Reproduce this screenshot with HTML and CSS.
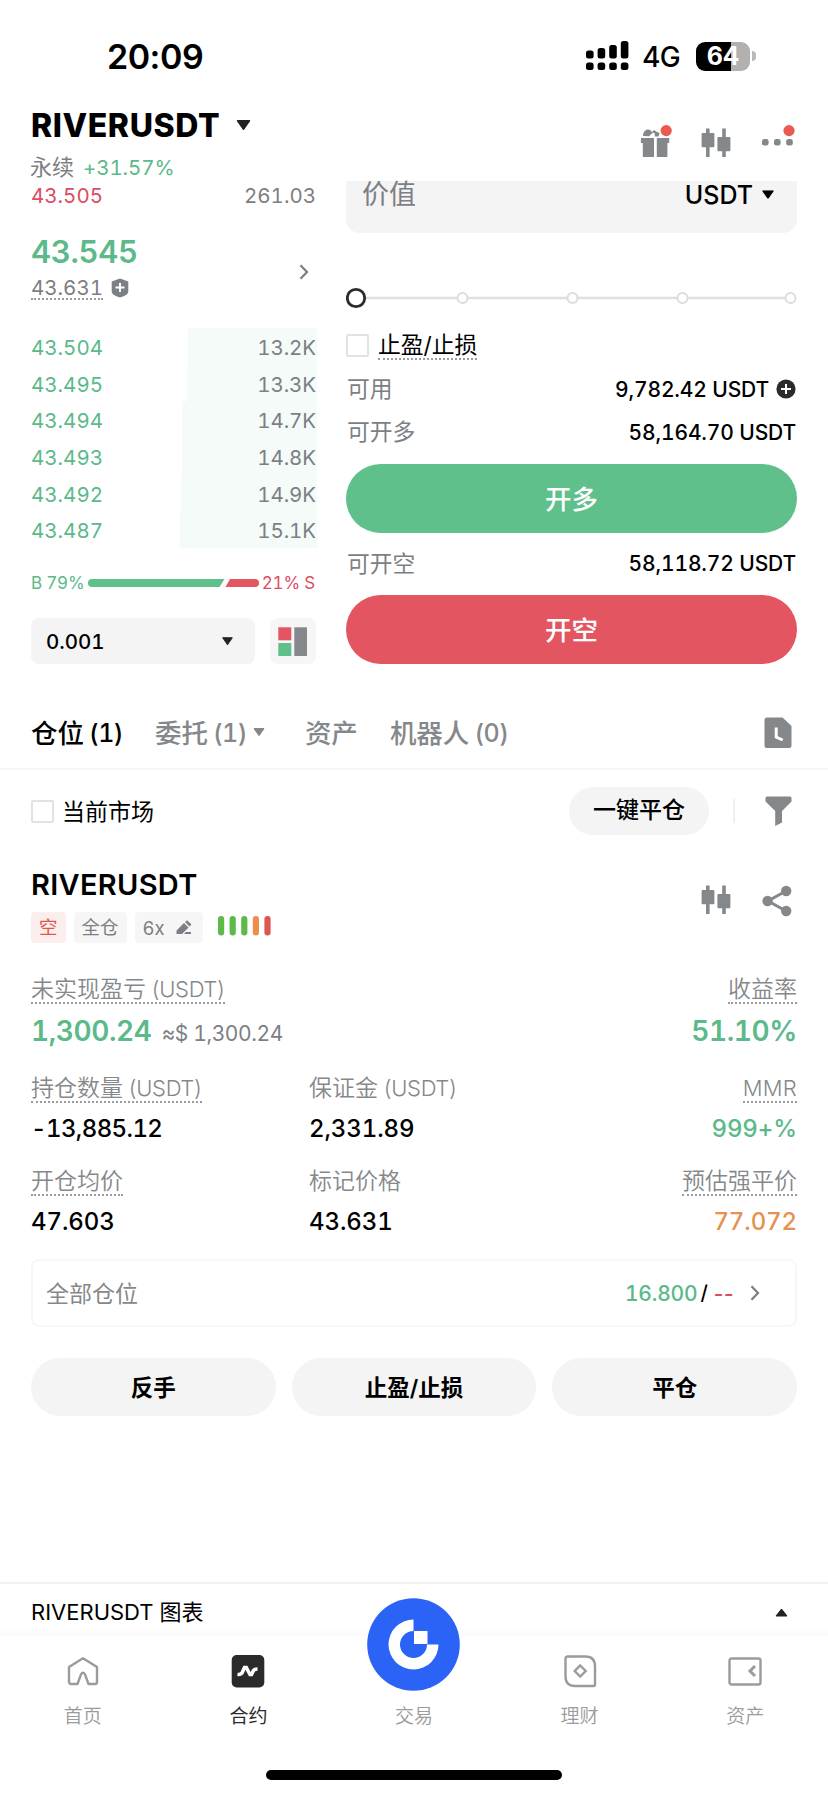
FILE: index.html
```html
<!DOCTYPE html>
<html lang="zh-CN">
<head>
<meta charset="utf-8">
<title>RIVERUSDT</title>
<link rel="stylesheet" href="styles.css">
</head>
<body>
<svg width="0" height="0" class="defs">
  <symbol id="candles" viewBox="0 0 30 30"><path d="M5 .5h3.6v4.6h3.8a1 1 0 0 1 1 1v12.2a1 1 0 0 1-1 1H8.600v9.700H5v-9.700H1.600a1 1 0 0 1-1-1V6.100a1 1 0 0 1 1-1H5zM21.200.5h3.600v8.600h3.600a1 1 0 0 1 1 1v12.200a1 1 0 0 1-1 1h-3.600v5.700h-3.600v-5.700h-3.800a1 1 0 0 1-1-1V10.100a1 1 0 0 1 1-1h3.800z"/></symbol>
  <symbol id="down" viewBox="0 0 14 10"><path d="M1 .8h12L7 9.400z" stroke-width="1.400" stroke-linejoin="round"/></symbol>
  <symbol id="chev" viewBox="0 0 10 16"><path d="M1.500 1.200 8 8l-6.500 6.800" fill="none" stroke="#7b7e82" stroke-width="2.200"/></symbol>
</svg>
<div class="phone">
  <header class="status">
    <span class="time">20:09</span>
    <div class="status-right">
      <svg width="43" height="30" viewBox="0 0 43 30"><rect x="0" y="9.500" width="7.600" height="8" rx="2.500"/><rect x="11.600" y="7" width="7.600" height="10.500" rx="2.500"/><rect x="23.200" y="4" width="7.600" height="13.500" rx="2.500"/><rect x="34.800" y="0" width="7.600" height="17.500" rx="2.500"/><rect x="0" y="21.500" width="7.600" height="7.500" rx="2.500"/><rect x="11.600" y="21.500" width="7.600" height="7.500" rx="2.500"/><rect x="23.200" y="21.500" width="7.600" height="7.500" rx="2.500"/><rect x="34.800" y="21.500" width="7.600" height="7.500" rx="2.500"/></svg>
      <span class="net">4G</span>
      <span class="battery">64</span><i class="nub"></i>
    </div>
  </header>

  <div class="head">
    <div>
      <div class="pair">RIVERUSDT<svg width="15" height="10" fill="#222" stroke="#222"><use href="#down"/></svg></div>
      <div class="perp">永续<span class="green">+31.57%</span></div>
    </div>
    <div class="head-icons">
      <svg width="32" height="34" viewBox="0 0 32 34"><path d="M1 14h13v19H2.800V19H.8zM16.800 14h12.400v5h-1.800v14H16.800zM3 12c0-6 6-9 9-4l2-2 2.600 1.800 3 1.200-1 3.500h-3.800V9.500L13 8.500l-4 3.800z" fill="#85888b"/><circle cx="26.200" cy="6.600" r="6.600" fill="#fff"/><circle cx="26.200" cy="6.600" r="5.600" fill="#eb5a50"/></svg>
      <svg class="candle" width="30" height="30" fill="#85888b"><use href="#candles"/></svg>
      <svg width="34" height="34" viewBox="0 0 34 34" fill="#85888b"><rect x="1" y="15" width="6.600" height="6.600" rx="2.300"/><rect x="13" y="15" width="6.600" height="6.600" rx="2.300"/><rect x="25.200" y="15" width="6.600" height="6.600" rx="2.300"/><circle cx="28" cy="6.600" r="5.600" fill="#eb5a50"/></svg>
    </div>
  </div>

  <main class="trade">
    <section class="book">
      <div class="ask"><span class="red">43.505</span><span class="qty">261.03</span></div>
      <div class="last">
        <div>
          <div class="price">43.545</div>
          <div class="mark"><span class="dotted">43.631</span><svg width="18" height="20" viewBox="0 0 18 20"><path d="M9 .5 17.300 3.500v10.500Q17 17 9 19.500 1 17 .7 14V3.500z" fill="#7c7f84"/><path d="M9 5v9M4.500 9.500h9" stroke="#fff" stroke-width="2"/></svg></div>
        </div>
        <svg class="go" width="10" height="16"><use href="#chev"/></svg>
      </div>
      <div class="bids">
        <div class="bid"><i style="width:129px"></i><span>43.504</span><b>13.2K</b></div>
        <div class="bid"><i style="width:130px"></i><span>43.495</span><b>13.3K</b></div>
        <div class="bid"><i style="width:135px"></i><span>43.494</span><b>14.7K</b></div>
        <div class="bid"><i style="width:135px"></i><span>43.493</span><b>14.8K</b></div>
        <div class="bid"><i style="width:136px"></i><span>43.492</span><b>14.9K</b></div>
        <div class="bid"><i style="width:137px"></i><span>43.487</span><b>15.1K</b></div>
      </div>
      <div class="ratio"><span class="green">B 79%</span><svg width="171" height="8" viewBox="0 0 171 8"><path d="M4 0h132.500l-5 8H4a4 4 0 0 1 0-8z" fill="#5fc08b"/><path d="M142 0h25a4 4 0 0 1 0 8h-29.500z" fill="#e25561"/></svg><span class="red">21% S</span></div>
      <div class="tick-row">
        <div class="tick"><span>0.001</span><svg width="11" height="8" viewBox="0 0 14 10" fill="#222" stroke="#222"><use href="#down"/></svg></div>
        <div class="layout"><svg width="30" height="30" viewBox="0 0 30 30"><path d="M.3.300h13v13H.3z" fill="#e25561"/><path d="M.3 16h13v13H.3z" fill="#5fc08b"/><path d="M16.300.300H29V29H16.300z" fill="#85888b"/></svg></div>
      </div>
    </section>

    <section class="order">
      <div class="field"><span>价值</span><span class="unit">USDT<svg width="12" height="9" viewBox="0 0 14 10" fill="#000" stroke="#000"><use href="#down"/></svg></span></div>
      <svg class="slider" width="451" height="22" viewBox="0 0 451 22" fill="#fff"><path d="M20 11h420" stroke="#e0e0e0" stroke-width="2.400"/><g stroke="#dcdcdc" stroke-width="2"><circle cx="116.500" cy="11" r="5"/><circle cx="226.500" cy="11" r="5"/><circle cx="336.500" cy="11" r="5"/><circle cx="444.500" cy="11" r="5"/></g><circle cx="10" cy="11" r="8.700" stroke="#2b2b2d" stroke-width="2.800"/></svg>
      <div class="tpsl"><i class="box"></i><span class="dotted">止盈/止损</span></div>
      <div class="avail r1"><span>可用</span><b>9,782.42 USDT<svg width="20" height="20" viewBox="0 0 20 20"><circle cx="10" cy="10" r="9.600" fill="#2b2b2d"/><path d="M10 5v10M5 10h10" stroke="#fff" stroke-width="2"/></svg></b></div>
      <div class="avail r2"><span>可开多</span><b>58,164.70 USDT</b></div>
      <button class="big long">开多</button>
      <div class="avail r3"><span>可开空</span><b>58,118.72 USDT</b></div>
      <button class="big short">开空</button>
    </section>
  </main>

  <nav class="tabs">
    <span class="tab on">仓位<em>(1)</em></span>
    <span class="tab t2">委托<em>(1)</em><svg width="12" height="8" viewBox="0 0 14 10" fill="#85888b" stroke="#85888b"><use href="#down"/></svg></span>
    <span class="tab t3">资产</span>
    <span class="tab t4">机器人<em>(0)</em></span>
    <svg class="end" width="28" height="32" viewBox="0 0 28 32"><path d="M3 .5h15.500L27.500 9v19.500a2.500 2.500 0 0 1-2.500 2.500H3A2.500 2.500 0 0 1 .5 28.500V3A2.500 2.500 0 0 1 3 .5z" fill="#85888b"/><path d="M12.200 10.500v9.500l6.500 3" fill="none" stroke="#fff" stroke-width="3"/></svg>
  </nav>

  <div class="filter">
    <i class="box"></i><span class="cur">当前市场</span>
    <span class="pill">一键平仓</span><i class="sep"></i>
    <svg width="27" height="31" viewBox="0 0 27 31"><path d="M2 .5h23a1.500 1.500 0 0 1 1.500 1.500v3.500L17 15v11.500L10.200 30V15L.5 5.500V2A1.500 1.500 0 0 1 2 .5z" fill="#85888b"/></svg>
  </div>

  <section class="position">
    <div class="pos-head">
      <div>
        <div class="name">RIVERUSDT</div>
        <div class="tags"><span class="tag short-tag">空</span><span class="tag">全仓</span><span class="tag lev">6x<svg width="16" height="16" viewBox="0 0 16 16" fill="#7c7f84"><path d="M.5 10.500 8 3l4.500 4.500L6 14H.5zM9 2l2-1.800L15.500 4.500 13.500 6.500zM8 14l2-2h5v2z"/></svg></span>
          <svg class="risk" width="55" height="20" viewBox="0 0 55 20"><g fill="#5cbb48"><rect x="0" width="6.200" height="19.500" rx="3"/><rect x="11.600" width="6.200" height="19.500" rx="3"/><rect x="23.200" width="6.200" height="19.500" rx="3"/></g><rect x="34.800" width="6.200" height="19.500" rx="3" fill="#e8904c"/><rect x="46.400" width="6.200" height="19.500" rx="3" fill="#df5651"/></svg>
        </div>
      </div>
      <div class="pos-icons">
        <svg width="30" height="30" fill="#85888b"><use href="#candles"/></svg>
        <svg width="30" height="32" viewBox="0 0 30 32" fill="#85888b"><path d="m24 6-18 10 18 10" fill="none" stroke="#85888b" stroke-width="3"/><circle cx="5.600" cy="16" r="5.200"/><circle cx="24.200" cy="6" r="5.200"/><circle cx="24.200" cy="26" r="5.200"/></svg>
      </div>
    </div>

    <div class="grid first">
      <div class="wide"><label class="dotted">未实现盈亏<em>(USDT)</em></label><p class="pnl green">1,300.24 <small>≈$ 1,300.24</small></p></div>
      <div class="right"><label class="dotted">收益率</label><p class="pnl green">51.10%</p></div>
    </div>
    <div class="grid second">
      <div><label class="dotted">持仓数量<em>(USDT)</em></label><p class="size">-13,885.12</p></div>
      <div><label>保证金<em>(USDT)</em></label><p>2,331.89</p></div>
      <div class="right"><label class="dotted"><em class="mmr">MMR</em></label><p class="green">999+%</p></div>
    </div>
    <div class="grid third">
      <div><label class="dotted">开仓均价</label><p>47.603</p></div>
      <div><label>标记价格</label><p>43.631</p></div>
      <div class="right"><label class="dotted">预估强平价</label><p class="orange">77.072</p></div>
    </div>

    <div class="all"><span>全部仓位</span><b><span class="green">16.800</span><span class="slash">/</span><span class="red dash">--</span><svg width="10" height="16"><use href="#chev"/></svg></b></div>
    <div class="actions"><button>反手</button><button>止盈/止损</button><button>平仓</button></div>
  </section>

  <div class="chart"><span><em>RIVERUSDT</em> 图表</span><svg width="13" height="9" viewBox="0 0 13 9"><path d="M1 8 6.500 1 12 8z" fill="#222" stroke="#222" stroke-linejoin="round"/></svg></div>
  <footer class="nav">
    <div class="item"><svg width="34" height="34" viewBox="0 0 34 34" fill="none" stroke="#999b9d" stroke-width="2.400" stroke-linejoin="round"><path d="M17 4.200 31 13v15a2 2 0 0 1-2 2h-6.500L19 20.300q-2-3-4 0L11.500 30H5A2 2 0 0 1 3 28V13z"/></svg><span>首页</span></div>
    <div class="item on"><svg width="34" height="34" viewBox="0 0 34 34"><rect x=".7" y="1" width="32.600" height="32.500" rx="5" fill="#2b2b2d"/><path d="M6.500 20.500q4 .3 5-2.500l2-4.500h1.800l3.700 7h1.500l2-4q1-1.500 4-1.500" fill="none" stroke="#fff" stroke-width="3.600"/></svg><span>合约</span></div>
    <div class="item"><svg class="logo" width="93" height="93" viewBox="0 0 93 93"><circle cx="46.500" cy="46.500" r="46.300" fill="#2b63f6"/><path d="M46.500 21.500a25 25 0 1 0 25 25h-11.500a13.500 13.500 0 1 1-13.500-13.500z" fill="#fff"/><path d="M47 33h13.500v13h-13.500z" fill="#fff"/></svg><span>交易</span></div>
    <div class="item"><svg width="34" height="34" viewBox="0 0 34 34" fill="none" stroke="#999b9d" stroke-width="2.400"><path d="M4.500 2.500h18Q32 2.500 32 12.500V30.500a1.500 1.500 0 0 1-1.500 1.500H12Q2.500 32 2.500 22V4.500a2 2 0 0 1 2-2z"/><path d="m17.200 11.500 5.500 5.500-5.500 5.500-5.500-5.500z"/></svg><span>理财</span></div>
    <div class="item"><svg width="34" height="34" viewBox="0 0 34 34" fill="none" stroke="#999b9d" stroke-width="2.400"><rect x="1.500" y="4.500" width="31" height="26" rx="2"/><path d="m27 12-5 5 5 5" stroke-width="3"/></svg><span>资产</span></div>
  </footer>
  <div class="home"></div>
</div>
</body>
</html>
```
FILE: styles.css
```css
* { box-sizing: border-box; }
body { margin: 0; background: #fff; }
.phone {
  width: 828px; height: 1795px; overflow: hidden; background: #fff; color: #000;
  display: flex; flex-direction: column;
  font: 400 21px "Inter", "Noto Sans CJK SC", sans-serif;
  font-feature-settings: "tnum";
}
.defs { position: absolute; }
em, i, b { font-style: normal; font-weight: inherit; }
svg { display: block; flex: none; }
button { border: 0; margin: 0; padding: 0; font: inherit; font-feature-settings: inherit; }
.green { color: #5bb98a; }
.red { color: #dc4d63; }
.orange { color: #e8914f; }
.dotted { border-bottom: 2px dotted #9a9c9f; }
.box { width: 23px; height: 23px; border: 2px solid #e2e2e2; border-radius: 2px; flex: none; }

.status { height: 99px; padding: 13px 72px 0 107px; display: flex; align-items: center; justify-content: space-between; }
.time { font-size: 34px; font-weight: 600; font-feature-settings: normal; letter-spacing: -.5px; }
.status-right { display: flex; align-items: center; }
.net { font-size: 28px; font-weight: 500; margin: 2px 16px 0 13px; letter-spacing: -.6px; }
.battery {
  width: 54px; height: 29px; border-radius: 9px; background: linear-gradient(90deg, #000 64%, #b1b1b1 64%);
  color: #fff; font-size: 25px; font-weight: 700; line-height: 29px; text-align: center; letter-spacing: 0;
}
.nub { width: 4px; height: 10px; border-radius: 0 4px 4px 0; background: #b9b9b9; margin-left: 2px; }

.head { height: 82px; padding: 0 33px 0 31px; display: flex; justify-content: space-between; }
.pair { font-size: 32px; font-weight: 800; height: 51px; display: flex; align-items: center; gap: 16px; letter-spacing: .6px; padding-top: 1px; }
.perp { font-size: 22px; color: #7c7f84; line-height: 30px; height: 30px; margin-top: 2px; margin-left: -1px; display: flex; }
.perp .green { font-size: 20.500px; margin-left: 9px; letter-spacing: -.1px; padding-top: 1px; }
.head-icons { display: flex; padding-top: 25px; }
.head-icons svg:first-child { margin-right: 29px; }
.candle { margin: 4px 30px 0 0; }

.trade { height: 483px; padding: 0 31px; display: flex; justify-content: space-between; }
.book { width: 286px; font-size: 20.500px; }
.ask { height: 30px; display: flex; justify-content: space-between; align-items: center; padding: 0 1px 2px 0; }
.qty { color: #7c7f84; }
.last { height: 117px; padding: 21px 8px 0 0; display: flex; justify-content: space-between; }
.price { font-size: 31px; font-weight: 600; color: #5bb98a; line-height: 40px; height: 43px; letter-spacing: -.3px; }
.mark { display: flex; align-items: center; gap: 8px; color: #7c7f84; }
.mark .dotted { line-height: 25px; height: 25px; }
.go { margin-top: 32px; }
.bids { height: 220px; display: flex; flex-direction: column; }
.bid { flex: 1; display: grid; grid-template-columns: 1fr auto; align-items: center; padding-top: 2px; padding-right: 1px; color: #5bb98a; }
.bid i { grid-area: 1 / 1 / 2 / 3; justify-self: end; align-self: stretch; margin-top: -2px; margin-right: -1px; background: #f4fbf8; }
.bid span { grid-area: 1 / 1; }
.bid b { grid-area: 1 / 2; color: #7c7f84; letter-spacing: -.1px; }
.ratio { height: 70px; display: flex; align-items: center; justify-content: space-between; font-size: 17px; white-space: nowrap; padding-right: 2px; letter-spacing: -.2px; }
.tick-row { display: flex; gap: 15px; }
.tick { width: 224px; height: 46px; background: #f4f4f4; border-radius: 8px; padding: 0 22px 0 15px; display: flex; align-items: center; justify-content: space-between; font-weight: 500; }
.layout { width: 46px; height: 46px; background: #f6f6f6; border-radius: 8px; padding: 8.500px 8px; }

.order { width: 451px; display: flex; flex-direction: column; }
.field { height: 52px; background: #f4f4f4; border-radius: 0 0 14px 14px; padding: 0 23px 25px 16px; display: flex; align-items: center; justify-content: space-between; color: #7c7f84; font-size: 27px; line-height: 26px; }
.unit { display: flex; align-items: center; gap: 9px; color: #000; font-size: 25px; font-weight: 500; }
.slider { margin: 54px 0 22px; }
.tpsl { height: 30px; display: flex; align-items: center; gap: 9px; font-size: 22.800px; }
.tpsl .box { margin-top: -2px; }
.tpsl .dotted { line-height: 26px; height: 28px; }
.avail { display: flex; align-items: center; justify-content: space-between; height: 43px; font-size: 22.800px; color: #7c7f84; padding: 0 1px 0 1px; }
.avail > span { padding-bottom: 4px; }
.avail b { color: #000; font-weight: 500; font-size: 21px; letter-spacing: -.15px; display: flex; align-items: center; gap: 7px; padding-bottom: 1px; }
.r1 { margin-top: 7px; }
.r3 { height: 62px; }
.big { height: 69px; border-radius: 35px; color: #fff; font-size: 26.500px; font-weight: 500; padding-bottom: 3px; }
.long { background: #5fc08b; margin-top: 10px; }
.short { background: #e25561; }

.tabs { height: 106px; border-bottom: 2px solid #f6f6f6; padding: 34px 36px 0 31px; display: flex; align-items: center; font-size: 26.500px; color: #85888b; }
.tab { display: flex; align-items: center; font-weight: 500; margin-top: -3px; }
.tab em { margin: 3px 0 0 5px; font-size: 25px; letter-spacing: -.6px; }
.tab svg { margin-left: 6px; }
.tab.on { color: #000; }
.t2 { margin-left: 32px; } .t3 { margin-left: 40px; } .t4 { margin-left: 32px; }
.end { margin-left: auto; }
.filter { height: 82px; padding: 0 36px 0 31px; display: flex; align-items: center; font-size: 23px; }
.cur { margin: -3px 0 0 8px; }
.pill { margin-left: auto; width: 140px; height: 48px; line-height: 47px; border-radius: 24px; background: #f4f4f4; text-align: center; font-weight: 500; font-size: 23px; }
.sep { width: 2px; height: 24px; background: #f0f0f0; margin: 0 30px 0 24px; }

.position { padding: 0 31px; height: 730px; }
.pos-head { height: 124px; padding-top: 14px; display: flex; justify-content: space-between; }
.name { font-size: 29px; font-weight: 600; line-height: 37px; height: 46px; letter-spacing: .3px; }
.tags { display: flex; height: 31px; }
.tag { background: #f6f6f6; color: #7c7f84; border-radius: 4px; padding: 0 8px; font-size: 18.500px; line-height: 30px; margin-right: 8px; }
.short-tag { background: #fdeeee; color: #e0564f; }
.lev { display: flex; align-items: center; gap: 11px; padding-right: 13px; width: 68px; margin-right: 15px; }
.risk { margin-top: 4px; }
.pos-icons { display: flex; gap: 31px; padding: 19px 5px 0 0; align-items: flex-start; }
.grid { display: grid; grid-template-columns: 278px 1fr auto; }
.grid label { display: inline-block; height: 28px; line-height: 26px; font-size: 23px; color: #85888b; white-space: nowrap; font-weight: 350; }
.grid em { font-size: 22px; margin-left: 5px; letter-spacing: -.35px; }
.grid em.mmr { margin: 0; letter-spacing: .2px; }
.grid p { margin: 0; font-size: 24px; font-weight: 500; line-height: 51px; letter-spacing: -.1px; }
.grid p.size { letter-spacing: -.6px; }
.grid p.pnl { font-size: 28px; font-weight: 600; line-height: 55px; letter-spacing: -.4px; }
.grid small { font-size: 21px; font-weight: 400; color: #7c7f84; letter-spacing: -.4px; margin-left: 3px; }
.right { text-align: right; }
.wide { grid-column: span 2; }
.first { height: 99px; }
.second { height: 93px; }
.third { height: 91px; }
.all { height: 68px; border: 2px solid #f7f7f7; border-radius: 8px; padding: 0 35px 0 13px; display: flex; align-items: center; justify-content: space-between; color: #85888b; font-size: 23px; }
.all > span { margin-top: -2px; }
.all b { display: flex; align-items: center; font-size: 21px; font-weight: 500; }
.all b .green { letter-spacing: -.2px; }
.dash { letter-spacing: -3.500px; }
.all svg { margin-left: 18px; }
.slash { color: #000; margin: 0 4px 0 3px; font-size: 20px; }
.actions { display: grid; grid-template-columns: 1fr 1fr 1fr; gap: 16px; margin-top: 31px; }
.actions button { height: 58px; border-radius: 29px; background: #f4f4f4; font-size: 22.500px; font-weight: 600; color: #000; padding-bottom: 2px; }

.chart { height: 54px; border-top: 2px solid #f2f2f2; background: linear-gradient(#fff 80%, #fafafa); padding: 4px 40px 0 31px; display: flex; align-items: center; justify-content: space-between; font-size: 22px; }
.chart span { margin-top: -4px; }
.nav { height: 134px; display: grid; grid-template-columns: repeat(5, 1fr); }
.item { display: flex; flex-direction: column; align-items: center; padding-top: 18px; color: #999b9d; font-size: 19px; line-height: 26px; gap: 16px; font-weight: 350; }
.item.on { color: #2b2b2d; font-weight: 400; }
.logo { margin: -56px 0 -3px; }
.home { width: 296px; height: 10px; border-radius: 5px; background: #000; align-self: center; }
```
